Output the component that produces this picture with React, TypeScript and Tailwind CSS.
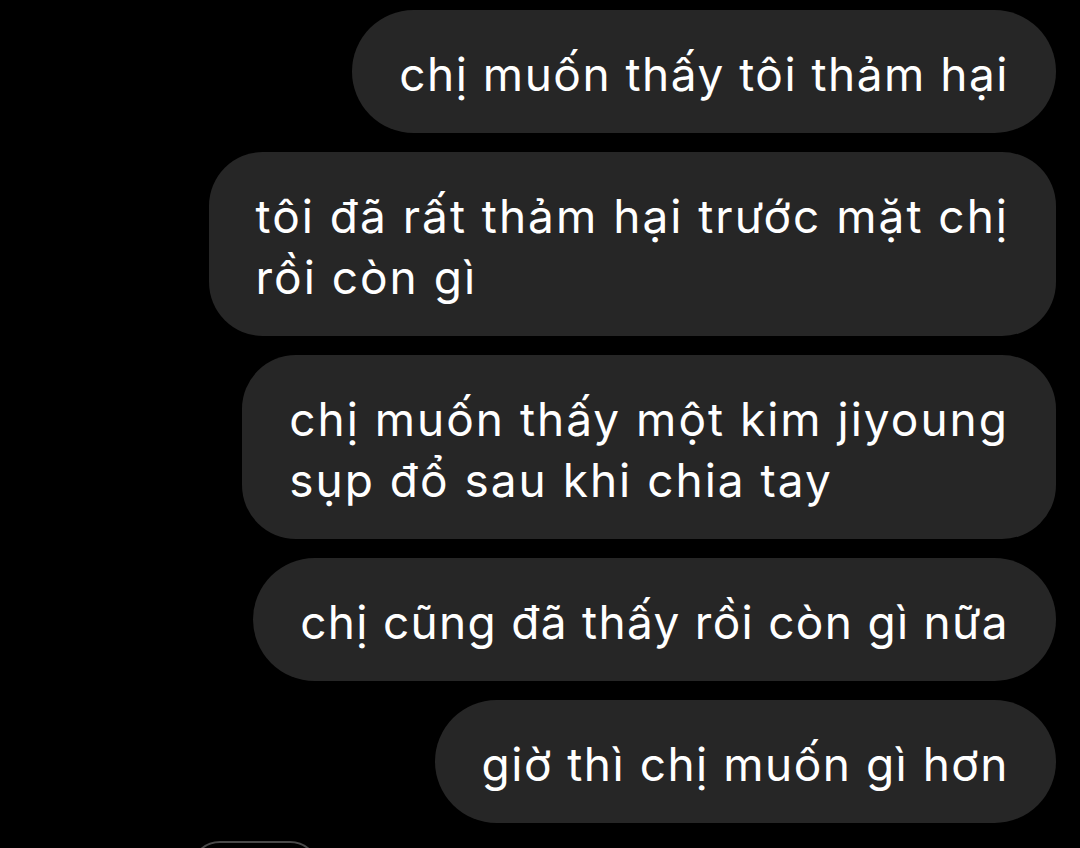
import React from "react";

const bubble =
  "bg-[#262626] text-white px-[47px] pt-[34px] pb-[28px] text-[46px] leading-[61px] whitespace-nowrap";

export default function App() {
  return (
    <div
      className="w-[1080px] h-[848px] bg-black overflow-hidden flex flex-col items-end pt-[10px] pr-[24px] gap-[19px]"
      style={{ fontFamily: "Inter, 'Noto Sans', sans-serif" }}
    >
      <div className={bubble + " rounded-[62px] tracking-[1.5px]"}>chị muốn thấy tôi thảm hại</div>
      <div className={bubble + " rounded-[54px] tracking-[2px]"}>
        tôi đã rất thảm hại trước mặt chị
        <br />
        rồi còn gì
      </div>
      <div className={bubble + " rounded-[54px] tracking-[2px]"}>
        chị muốn thấy một kim jiyoung
        <br />
        sụp đổ sau khi chia tay
      </div>
      <div className={bubble + " rounded-[62px] tracking-[1.3px]"}>chị cũng đã thấy rồi còn gì nữa</div>
      <div className={bubble + " rounded-[62px] tracking-[1.5px]"}>giờ thì chị muốn gì hơn</div>
      <div className="self-start ml-[190px] w-[130px] h-[60px] shrink-0 rounded-[30px] border-2 border-[#4a4a4a] bg-black -mt-[1px]" />
    </div>
  );
}
